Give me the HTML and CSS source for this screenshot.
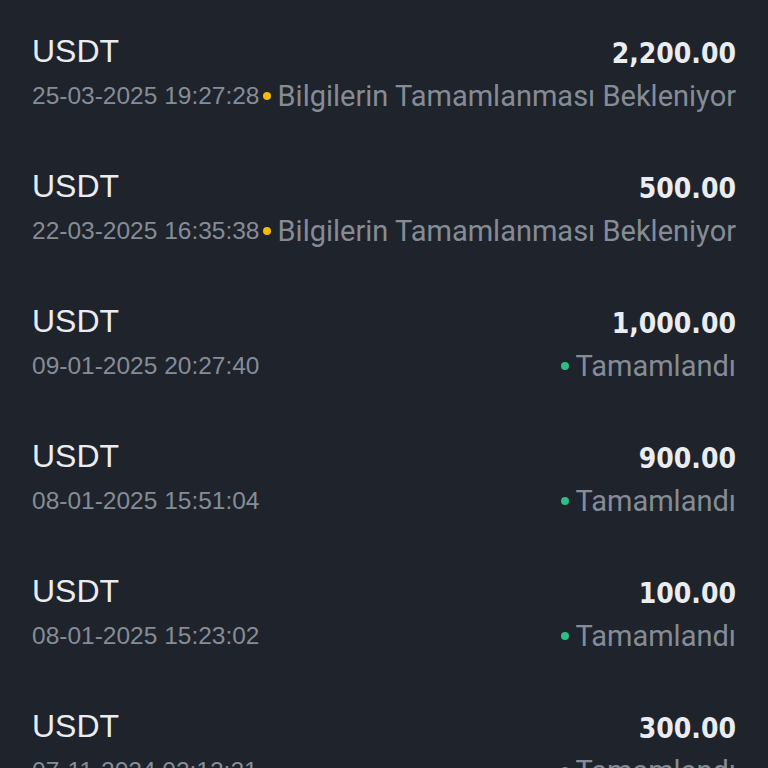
FILE: index.html
```html
<!DOCTYPE html>
<html>
<head>
	<title>Deposit history</title>
	<meta charset="utf-8">
	<link rel="stylesheet" href="styles.css">
</head>
<body>
	<div class="list">
		<div class="row">
			<div class="line">
				<span class="coin">USDT</span>
				<span class="amount">2,200.00</span>
			</div>
			<div class="line">
				<span class="date">25-03-2025 19:27:28</span>
				<span class="status"><i class="dot wait"></i>Bilgilerin Tamamlanması Bekleniyor</span>
			</div>
		</div>
		<div class="row">
			<div class="line">
				<span class="coin">USDT</span>
				<span class="amount">500.00</span>
			</div>
			<div class="line">
				<span class="date">22-03-2025 16:35:38</span>
				<span class="status"><i class="dot wait"></i>Bilgilerin Tamamlanması Bekleniyor</span>
			</div>
		</div>
		<div class="row">
			<div class="line">
				<span class="coin">USDT</span>
				<span class="amount">1,000.00</span>
			</div>
			<div class="line">
				<span class="date">09-01-2025 20:27:40</span>
				<span class="status"><i class="dot done"></i>Tamamlandı</span>
			</div>
		</div>
		<div class="row">
			<div class="line">
				<span class="coin">USDT</span>
				<span class="amount">900.00</span>
			</div>
			<div class="line">
				<span class="date">08-01-2025 15:51:04</span>
				<span class="status"><i class="dot done"></i>Tamamlandı</span>
			</div>
		</div>
		<div class="row">
			<div class="line">
				<span class="coin">USDT</span>
				<span class="amount">100.00</span>
			</div>
			<div class="line">
				<span class="date">08-01-2025 15:23:02</span>
				<span class="status"><i class="dot done"></i>Tamamlandı</span>
			</div>
		</div>
		<div class="row">
			<div class="line">
				<span class="coin">USDT</span>
				<span class="amount">300.00</span>
			</div>
			<div class="line">
				<span class="date">07-11-2024 02:12:21</span>
				<span class="status"><i class="dot done"></i>Tamamlandı</span>
			</div>
		</div>
	</div>
</body>
</html>
```

FILE: styles.css
```css
html, body {
	margin: 0;
	height: 100%;
	background-color: #1e232c;
	overflow: hidden;
}
.list {
	padding: 0 32px;
}
.row {
	height: 135px;
	box-sizing: border-box;
	padding-top: 33px;
}
.line {
	display: flex;
	justify-content: space-between;
	align-items: center;
}
.line + .line {
	margin-top: 12px;
}
.coin {
	font-family: "Liberation Sans", Arial, sans-serif;
	font-size: 32px;
	line-height: 36px;
	color: #eaecef;
}
.amount {
	font-family: "DejaVu Sans Condensed", "DejaVu Sans", sans-serif;
	font-stretch: condensed;
	font-weight: bold;
	font-size: 28px;
	line-height: 31px;
	padding-top: 5px;
	color: #eaecef;
}
.date {
	font-family: "Liberation Sans", Arial, sans-serif;
	font-size: 24.5px;
	line-height: 30px;
	color: #868c96;
}
.status {
	display: flex;
	align-items: center;
	font-family: Roboto, sans-serif;
	font-size: 29px;
	line-height: 30px;
	color: #868c96;
}
.dot {
	width: 8px;
	height: 8px;
	border-radius: 50%;
	margin-right: 7px;
}
.wait {
	background-color: #f0b90b;
}
.done {
	background-color: #2ebd85;
}
```
